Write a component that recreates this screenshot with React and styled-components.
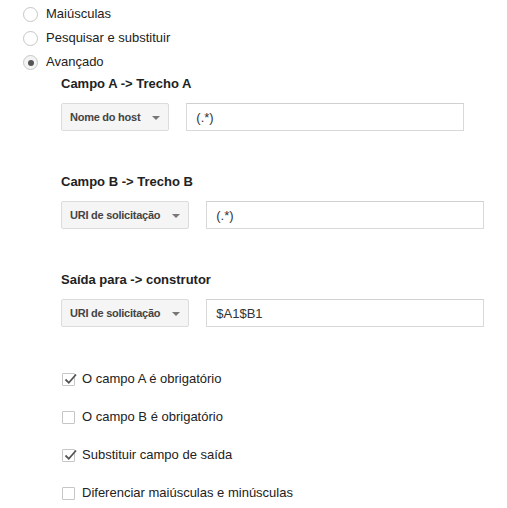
import React from "react";
import styled, { createGlobalStyle } from "styled-components";

const GlobalStyle = createGlobalStyle`
  html, body { margin: 0; padding: 0; background: #fff; }
  body { font-family: Arial, "Liberation Sans", sans-serif; font-size: 13px; color: #222; }
`;

const Page = styled.div`
  padding: 2px 0 0 23px;
`;

const RadioGroup = styled.div`
  display: flex;
  flex-direction: column;
`;

const RadioRow = styled.label`
  display: flex;
  align-items: center;
  gap: 8px;
  height: 24px;
  line-height: 24px;
`;

const RadioCircle = styled.span`
  position: relative;
  box-sizing: border-box;
  width: 15px;
  height: 15px;
  margin-top: 1px;
  border-radius: 50%;
  border: 1px solid #c6c6c6;
  background: ${(p) => (p.$checked ? "#f4f4f4" : "#fff")};
  flex-shrink: 0;
  &::after {
    content: "";
    display: ${(p) => (p.$checked ? "block" : "none")};
    position: absolute;
    left: 3.5px;
    top: 3.5px;
    width: 6px;
    height: 6px;
    border-radius: 50%;
    background: #555;
  }
`;

const Indented = styled.div`
  padding-left: 38px;
`;

const Advanced = styled(Indented)`
  margin-top: 2px;
  display: flex;
  flex-direction: column;
  gap: 43px;
`;

const Section = styled.div`
  display: flex;
  flex-direction: column;
  gap: 11px;
`;

const Heading = styled.div`
  font-weight: bold;
  font-size: 13px;
  line-height: 16px;
  color: #222;
`;

const FieldRow = styled.div`
  display: flex;
  align-items: center;
  gap: 17px;
`;

const Dropdown = styled.div`
  box-sizing: border-box;
  height: 28px;
  display: flex;
  align-items: center;
  padding: 0 8px 0 8px;
  gap: 12px;
  background: #f5f5f5;
  border: 1px solid #dcdcdc;
  border-radius: 2px;
  font-weight: bold;
  font-size: 11px;
  letter-spacing: -0.25px;
  color: #444;
`;

const Arrow = styled.span`
  width: 0;
  height: 0;
  margin-top: 2px;
  border-left: 4px solid transparent;
  border-right: 4px solid transparent;
  border-top: 4px solid #777;
`;

const TextInput = styled.div`
  box-sizing: border-box;
  width: 278px;
  height: 28px;
  display: flex;
  align-items: center;
  padding-left: 9px;
  border: 1px solid #d9d9d9;
  border-top-color: #d0d0d0;
  font-size: 13px;
  color: #333;
  background: #fff;
`;

const CheckList = styled(Indented)`
  margin-top: 44px;
  display: flex;
  flex-direction: column;
  gap: 22px;
`;

const CheckRow = styled.label`
  display: flex;
  align-items: center;
  gap: 7px;
  height: 16px;
  line-height: 16px;
  padding-left: 1px;
`;

const CheckBox = styled.span`
  position: relative;
  box-sizing: border-box;
  width: 13px;
  height: 13px;
  margin-top: 1px;
  border: 1px solid #c6c6c6;
  border-radius: 1px;
  background: #fff;
  flex-shrink: 0;
`;

const CheckMark = styled.svg`
  position: absolute;
  left: 1px;
  top: -2px;
  width: 14px;
  height: 14px;
  overflow: visible;
`;

function Radio({ checked, children }) {
  return (
    <RadioRow>
      <RadioCircle $checked={checked} />
      <span>{children}</span>
    </RadioRow>
  );
}

function Check({ checked, children }) {
  return (
    <CheckRow>
      <CheckBox>
        {checked && (
          <CheckMark viewBox="0 0 14 14">
            <path d="M1.5 7.5 L4.8 10.8 L12 2.5" fill="none" stroke="#555" strokeWidth="1.8" />
          </CheckMark>
        )}
      </CheckBox>
      <span>{children}</span>
    </CheckRow>
  );
}

function Field({ title, select, value }) {
  return (
    <Section>
      <Heading>{title}</Heading>
      <FieldRow>
        <Dropdown>
          <span>{select}</span>
          <Arrow />
        </Dropdown>
        <TextInput>{value}</TextInput>
      </FieldRow>
    </Section>
  );
}

export default function App() {
  return (
    <>
      <GlobalStyle />
      <Page>
        <RadioGroup>
          <Radio>Maiúsculas</Radio>
          <Radio>Pesquisar e substituir</Radio>
          <Radio checked>Avançado</Radio>
        </RadioGroup>
        <Advanced>
          <Field title="Campo A -> Trecho A" select="Nome do host" value="(.*)" />
          <Field title="Campo B -> Trecho B" select="URI de solicitação" value="(.*)" />
          <Field title="Saída para -> construtor" select="URI de solicitação" value="$A1$B1" />
        </Advanced>
        <CheckList>
          <Check checked>O campo A é obrigatório</Check>
          <Check>O campo B é obrigatório</Check>
          <Check checked>Substituir campo de saída</Check>
          <Check>Diferenciar maiúsculas e minúsculas</Check>
        </CheckList>
      </Page>
    </>
  );
}
